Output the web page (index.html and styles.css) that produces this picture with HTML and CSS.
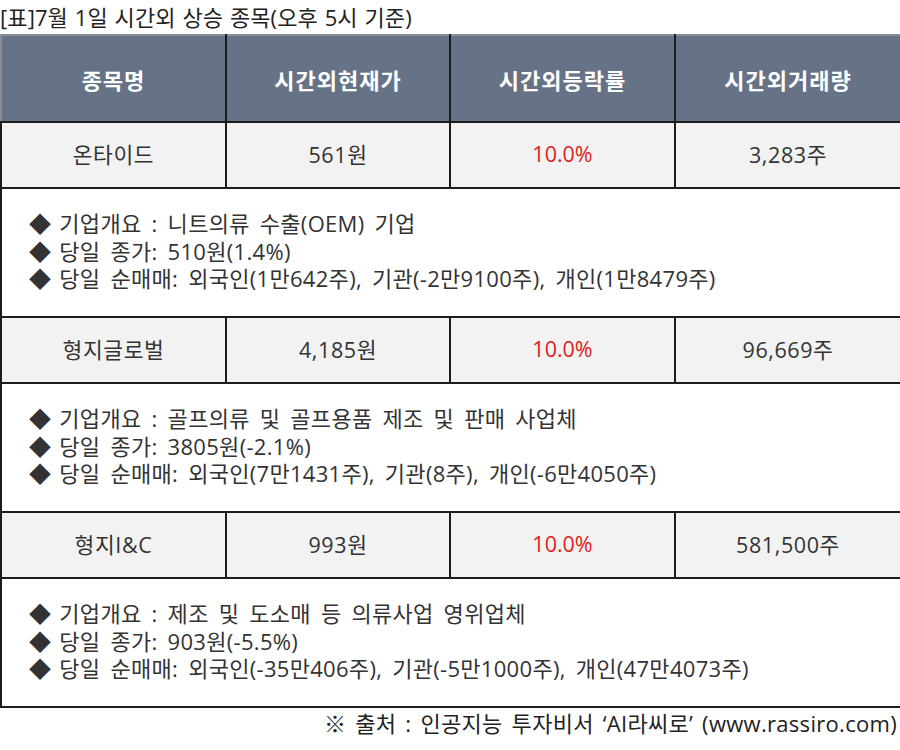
FILE: index.html
```html
<!DOCTYPE html>
<html lang="ko">
<head>
<meta charset="utf-8">
<link rel="stylesheet" href="styles.css">
</head>
<body>
<div class="title">[표]7월 1일 시간외 상승 종목(오후 5시 기준)</div>
<table class="stocks">
  <colgroup>
    <col class="c1"><col class="c2"><col class="c3"><col class="c4">
  </colgroup>
  <thead>
    <tr class="head">
      <th>종목명</th><th>시간외현재가</th><th>시간외등락률</th><th>시간외거래량</th>
    </tr>
  </thead>
  <tbody>
    <tr class="data">
      <td>온타이드</td><td>561원</td><td class="up">10.0%</td><td>3,283주</td>
    </tr>
    <tr class="detail">
      <td colspan="4">
        <div class="line"><span class="bullet">◆ </span>기업개요 : 니트의류 수출(OEM) 기업</div>
        <div class="line"><span class="bullet">◆ </span>당일 종가: 510원(1.4%)</div>
        <div class="line"><span class="bullet">◆ </span>당일 순매매: 외국인(1만642주), 기관(-2만9100주), 개인(1만8479주)</div>
      </td>
    </tr>
    <tr class="data">
      <td>형지글로벌</td><td>4,185원</td><td class="up">10.0%</td><td>96,669주</td>
    </tr>
    <tr class="detail">
      <td colspan="4">
        <div class="line"><span class="bullet">◆ </span>기업개요 : 골프의류 및 골프용품 제조 및 판매 사업체</div>
        <div class="line"><span class="bullet">◆ </span>당일 종가: 3805원(-2.1%)</div>
        <div class="line"><span class="bullet">◆ </span>당일 순매매: 외국인(7만1431주), 기관(8주), 개인(-6만4050주)</div>
      </td>
    </tr>
    <tr class="data">
      <td>형지I&amp;C</td><td>993원</td><td class="up">10.0%</td><td>581,500주</td>
    </tr>
    <tr class="detail">
      <td colspan="4">
        <div class="line"><span class="bullet">◆ </span>기업개요 : 제조 및 도소매 등 의류사업 영위업체</div>
        <div class="line"><span class="bullet">◆ </span>당일 종가: 903원(-5.5%)</div>
        <div class="line"><span class="bullet">◆ </span>당일 순매매: 외국인(-35만406주), 기관(-5만1000주), 개인(47만4073주)</div>
      </td>
    </tr>
  </tbody>
</table>
<div class="source">※ 출처 : 인공지능 투자비서 ‘AI라씨로’ (www.rassiro.com)</div>
</body>
</html>
```
FILE: styles.css
```css
html, body {
  margin: 0;
  padding: 0;
  background: #ffffff;
}
body {
  width: 900px;
  font-family: "Open Sans", "Noto Sans CJK KR", sans-serif;
  color: #333333;
}
.title {
  height: 34px;
  font-size: 22px;
  line-height: 34px;
  letter-spacing: 0.1px;
  word-spacing: 1px;
  color: #222222;
  white-space: nowrap;
}
.stocks {
  width: 900px;
  border-collapse: collapse;
  table-layout: fixed;
}
.c1 { width: 225px; }
.c2 { width: 224px; }
.c3 { width: 225px; }
.c4 { width: 226px; }
.stocks th,
.stocks td {
  border: 2px solid #1c1c1c;
  padding: 0;
}
.head th {
  height: 85px;
  background: #667387;
  color: #ffffff;
  font-weight: 700;
  font-size: 22px;
  letter-spacing: 1px;
  text-align: center;
  border-top-color: #8a8f96;
}
.head th:first-child { border-left-color: #8a8f96; }
.data td {
  height: 60px;
  background: #f2f2f2;
  text-align: center;
  font-size: 21.5px;
  letter-spacing: 0.6px;
  padding-bottom: 4px;
}
.data td.up {
  color: #e02020;
  letter-spacing: 0;
}
.detail td {
  height: 129px;
  background: #ffffff;
  text-align: left;
  vertical-align: top;
  padding: 21px 0 0 27px;
  box-sizing: border-box;
}
.line {
  font-size: 22px;
  line-height: 27.5px;
  letter-spacing: 0.3px;
  word-spacing: 4px;
  white-space: nowrap;
}
.bullet {
  word-spacing: 2px;
}
.source {
  text-align: right;
  font-size: 22px;
  line-height: 30px;
  letter-spacing: 0.3px;
  word-spacing: 3px;
  padding-right: 3px;
  color: #222222;
  white-space: nowrap;
}
```
